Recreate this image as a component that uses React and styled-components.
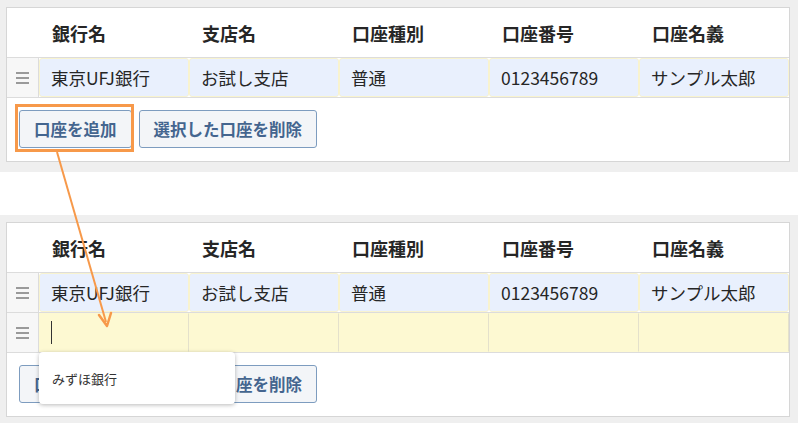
import React from 'react';
import styled, { createGlobalStyle } from 'styled-components';

const orange = '#f7994a';
const gridLine = '#dcdcdc';

const GlobalStyle = createGlobalStyle`
  html, body {
    margin: 0;
    padding: 0;
    background: #ffffff;
  }
  body {
    font-family: "Noto Sans CJK JP", "Noto Sans", sans-serif;
    color: #222;
  }
`;

const Page = styled.div`
  position: relative;
  width: 798px;
  height: 424px;
  overflow: hidden;
  display: flex;
  flex-direction: column;
  gap: 43px;
`;

const Section = styled.div`
  background: #efefef;
  padding: ${(p) => p.pad};
`;

const Panel = styled.div`
  width: 782px;
  background: #ffffff;
  border: 1px solid #d6d6d6;
`;

const Row = styled.div`
  position: relative;
  display: grid;
  grid-template-columns: 32px repeat(5, 150px);
  height: ${(p) => p.h}px;
  border-bottom: 1px solid ${gridLine};
  background: ${(p) => (p.editing ? '#fdf9d2' : '#ffffff')};
`;

const HeadCell = styled.div`
  display: flex;
  align-items: center;
  padding: 0 13px;
  font-size: 18px;
  font-weight: 700;
  color: #262626;
`;

const Handle = styled.div`
  display: flex;
  align-items: center;
  justify-content: center;
  background: #f7f7f7;
  border-right: 1px solid ${gridLine};
`;

const HandleIcon = styled.span`
  display: flex;
  flex-direction: column;
  gap: 3px;
  span {
    display: block;
    width: 13px;
    height: 2px;
    background: #9a9a9a;
  }
`;

const Cell = styled.div`
  position: relative;
  display: flex;
  align-items: center;
  padding: 0 11px;
  font-size: 17.5px;
  color: #262626;
  background: ${(p) => (p.editing ? '#fdf9d2' : '#e9f0fd')};
  border: 1px solid ${(p) => (p.editing ? '#fdf9d2' : '#f8f3cf')};
  border-right: 1px solid ${(p) => (p.editing ? '#e4e1cb' : '#f8f3cf')};
  border-radius: ${(p) => (p.editing ? '0' : '3px')};
`;

const Caret = styled.span`
  display: block;
  width: 1px;
  height: 23px;
  background: #333;
`;

const Suggest = styled.div`
  position: absolute;
  left: -1px;
  top: calc(100% + 1px);
  width: 196px;
  height: 52px;
  box-sizing: border-box;
  display: flex;
  align-items: center;
  padding-left: 13px;
  background: #ffffff;
  border-radius: 4px;
  box-shadow: 0 1px 4px rgba(0, 0, 0, 0.28);
  font-size: 13px;
  color: #333;
  z-index: 2;
`;

const Actions = styled.div`
  display: flex;
  gap: 7px;
  padding: 12px 12px 13px;
`;

const Button = styled.button`
  height: 38px;
  padding: 0 14px;
  font-family: inherit;
  font-size: 16.5px;
  font-weight: 700;
  color: #44658f;
  background: #f3f5f8;
  border: 1px solid #7d9cbf;
  border-radius: 3px;
`;

const Overlay = styled.svg`
  position: absolute;
  left: 0;
  top: 0;
  pointer-events: none;
  z-index: 3;
`;

const columns = ['銀行名', '支店名', '口座種別', '口座番号', '口座名義'];
const account = ['東京UFJ銀行', 'お試し支店', '普通', '0123456789', 'サンプル太郎'];

const DragHandle = () => (
  <Handle>
    <HandleIcon>
      <span />
      <span />
      <span />
    </HandleIcon>
  </Handle>
);

const Header = () => (
  <Row h={49}>
    <div />
    {columns.map((c) => (
      <HeadCell key={c}>{c}</HeadCell>
    ))}
  </Row>
);

const AccountRow = () => (
  <Row h={39}>
    <DragHandle />
    {account.map((v) => (
      <Cell key={v}>{v}</Cell>
    ))}
  </Row>
);

const NewRow = () => (
  <Row h={39} editing>
    <DragHandle />
    <Cell editing>
      <Caret />
      <Suggest>みずほ銀行</Suggest>
    </Cell>
    {[1, 2, 3, 4].map((i) => (
      <Cell key={i} editing />
    ))}
  </Row>
);

const ActionBar = () => (
  <Actions>
    <Button>口座を追加</Button>
    <Button>選択した口座を削除</Button>
  </Actions>
);

const App = () => (
  <>
    <GlobalStyle />
    <Page>
      <Section pad="7px 8px 10px 6px">
        <Panel>
          <Header />
          <AccountRow />
          <ActionBar />
        </Panel>
      </Section>
      <Section pad="7px 8px 6px 6px">
        <Panel>
          <Header />
          <AccountRow />
          <NewRow />
          <ActionBar />
        </Panel>
      </Section>
      <Overlay width="798" height="424" viewBox="0 0 798 424">
        <rect x="16.5" y="105.5" width="116" height="45" fill="none" stroke={orange} strokeWidth="3" />
        <line x1="57" y1="152" x2="106" y2="322" stroke={orange} strokeWidth="2" />
        <polyline
          points="99,315 107,326 111,313"
          fill="none"
          stroke={orange}
          strokeWidth="2.5"
          strokeLinejoin="round"
          strokeLinecap="round"
        />
      </Overlay>
    </Page>
  </>
);

export default App;
